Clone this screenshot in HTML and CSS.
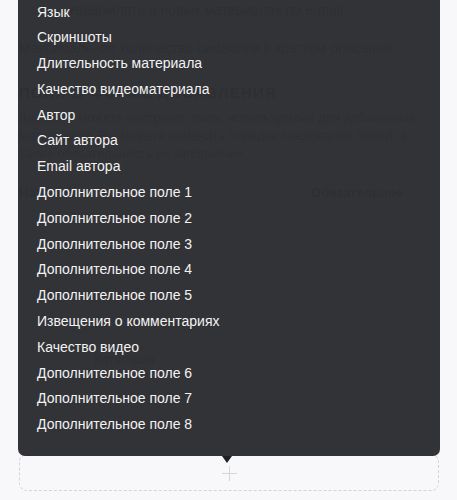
FILE: index.html
```html
<!DOCTYPE html>
<html lang="ru">
<head>
<meta charset="utf-8">
<link rel="stylesheet" href="styles.css">
</head>
<body>
<div class="page">
  <div class="bg">
    <p class="opt opt-indent">Уведомлять о новых материалах по e-mail</p>
    <p class="opt">Максимальное количество символов в кратком описании</p>
    <h3 class="section">Поля в форме добавления</h3>
    <p class="desc">Здесь вы можете настроить поля, используемые для добавления материалов. Вы можете изменить порядок следования полей, а также обязательность их заполнения.</p>
    <div class="thead"><span>Название</span><span>Обязательное</span></div>
    <div class="row"><div class="input"></div><div class="check"></div></div>
    <div class="row"><div class="input"></div><div class="check"></div></div>
    <div class="row"><div class="input"></div><div class="check"></div></div>
    <div class="row"><div class="input">Категория</div><div class="check"></div></div>
  </div>
  <div class="add-box"><span class="plus"></span></div>

  <ul class="menu">
    <li>Язык</li>
    <li>Скриншоты</li>
    <li>Длительность материала</li>
    <li>Качество видеоматериала</li>
    <li>Автор</li>
    <li>Сайт автора</li>
    <li>Email автора</li>
    <li>Дополнительное поле 1</li>
    <li>Дополнительное поле 2</li>
    <li>Дополнительное поле 3</li>
    <li>Дополнительное поле 4</li>
    <li>Дополнительное поле 5</li>
    <li>Извещения о комментариях</li>
    <li>Качество видео</li>
    <li>Дополнительное поле 6</li>
    <li>Дополнительное поле 7</li>
    <li>Дополнительное поле 8</li>
  </ul>
</div>
</body>
</html>
```

FILE: styles.css
```css
* { box-sizing: border-box; }
html, body { margin: 0; padding: 0; }
body {
  background: #f8f8fa;
  font-family: "Liberation Sans", "Noto Sans", sans-serif;
  width: 457px;
  height: 500px;
  overflow: hidden;
}
.page {
  position: relative;
  padding: 0 18px 0 19px;
}
.bg {
  color: #55565b;
  font-size: 14px;
  padding-top: 0;
  height: 456px;
}
.opt { margin: 0; line-height: 20px; }
.opt-indent { padding-left: 48px; padding-top: 0; }
.opt + .opt { margin-top: 18px; }
.section {
  margin: 26px 0 0;
  font-size: 15px;
  text-transform: uppercase;
  letter-spacing: 1.2px;
  font-weight: bold;
}
.desc { margin: 8px 0 0; line-height: 18px; font-size: 13px; }
.thead {
  display: flex;
  justify-content: space-between;
  padding: 0 36px 0 0;
  margin-top: 22px;
  font-weight: bold;
  font-size: 13px;
}
.row {
  display: flex;
  align-items: center;
  gap: 40px;
  margin-top: 12px;
  padding-left: 24px;
}
.row:first-of-type { margin-top: 0; }
.input {
  width: 250px;
  height: 32px;
  border: 1px solid #bbb;
  border-radius: 6px;
  padding: 7px 10px 0 50px;
  font-size: 13px;
}
.check { width: 16px; height: 16px; border: 1px solid #bbb; border-radius: 3px; }

.add-box {
  height: 37px;
  border: 1px dashed #d4d4d8;
  border-radius: 8px;
  display: flex;
  align-items: center;
  justify-content: center;
  margin-top: -2px;
  padding-top: 2px;
}
.plus {
  position: relative;
  width: 15px;
  height: 15px;
}
.plus::before, .plus::after {
  content: "";
  position: absolute;
  background: #d6d6da;
}
.plus::before { left: 7px; top: 0; width: 1px; height: 15px; }
.plus::after { top: 7px; left: 0; height: 1px; width: 15px; }

.menu {
  position: absolute;
  left: 18px;
  top: -20px;
  width: 422px;
  height: 476px;
  margin: 0;
  padding: 19.5px 0 0 19px;
  list-style: none;
  background: rgba(45, 46, 50, 0.975);
  border-radius: 0 0 7px 7px;
  color: #f2f2f2;
  font-size: 14px;
}
.menu li { line-height: 25.8px; }
.menu::after {
  content: "";
  position: absolute;
  left: 204px;
  bottom: -7px;
  border-left: 5.5px solid transparent;
  border-right: 5.5px solid transparent;
  border-top: 7px solid #1f2023;
}
```
